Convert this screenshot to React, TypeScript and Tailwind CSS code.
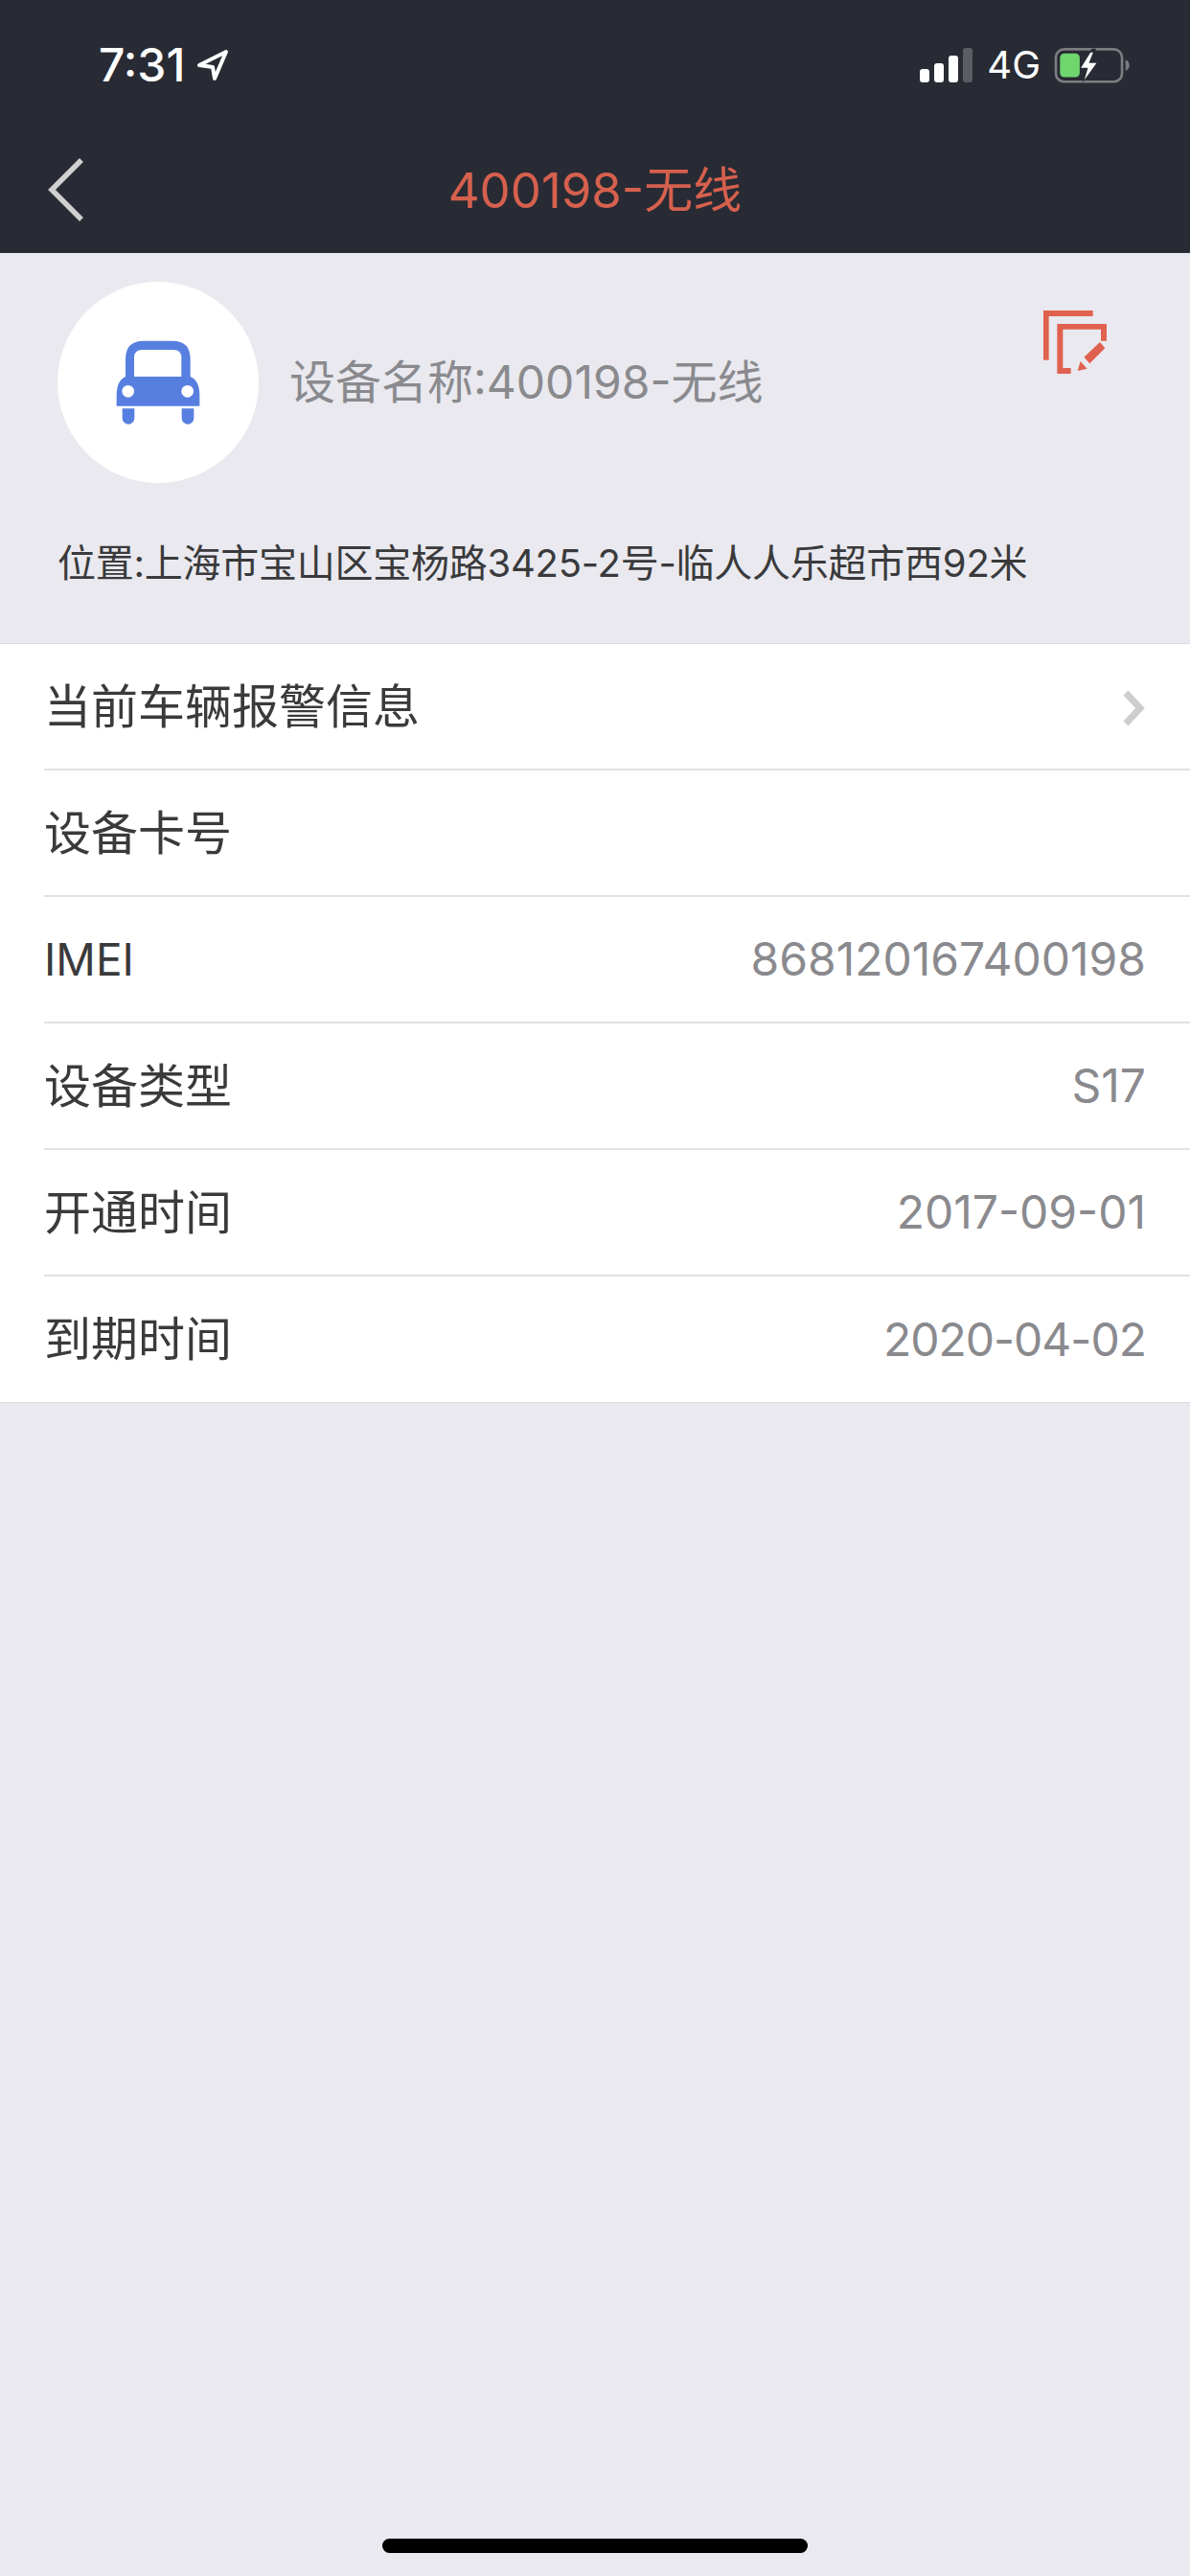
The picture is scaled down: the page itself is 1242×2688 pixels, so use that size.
const FONT = "font-['Inter','Noto_Sans_CJK_SC',sans-serif]";

function Row({ label, value, chevron, last, latin, tight }: { label: string; value?: string; chevron?: boolean; last?: boolean; latin?: boolean; tight?: boolean }) {
  return (
    <div className="pl-[46px]">
      <div className={`flex items-center justify-between pr-[46px] ${last ? "h-[131px]" : "h-[132px] border-b-2 border-[#e1e1e3]"}`}>
        <span className={`${latin ? "text-[46px]" : "text-[49px]"} text-[#3a3a3c] leading-none`}>{label}</span>
        {value && <span className={`text-[48px] text-[#8a8a8e] leading-none ${tight ? "tracking-[-1px]" : ""}`}>{value}</span>}
        {chevron && (
          <svg width="24" height="44" viewBox="0 0 24 44" className="mt-[6px]">
            <polyline points="3,5 18,21 3,37" fill="none" stroke="#cdcdcf" strokeWidth="7" />
          </svg>
        )}
      </div>
    </div>
  );
}

export default function App() {
  return (
    <div className={`h-[2688px] w-[1242px] flex flex-col bg-[#e9e9ef] overflow-hidden ${FONT}`}>
      <header className="h-[264px] shrink-0 bg-[#282b33] flex flex-col">
        <div className="h-[132px] flex items-start justify-between pt-[42px] pl-[103px] pr-[63px]">
          <div className="flex items-center gap-[12px]">
            <span className="text-[48px] leading-[52px] font-medium text-white">7:31</span>
            <svg width="34" height="34" viewBox="0 0 34 34">
              <path d="M31 3 L3 17 L17 19 L19 31 Z" fill="none" stroke="#fff" strokeWidth="4" strokeLinejoin="round" />
            </svg>
          </div>
          <div className="flex items-center gap-[14px] pt-[6px]">
            <svg width="56" height="36" viewBox="0 0 56 36">
              <rect x="0" y="22" width="10" height="14" rx="3" fill="#fff" />
              <rect x="15" y="16" width="10" height="20" rx="3" fill="#fff" />
              <rect x="30" y="8" width="10" height="28" rx="3" fill="#fff" />
              <rect x="45" y="0" width="10" height="36" rx="3" fill="#5c5d63" />
            </svg>
            <span className="text-[40px] leading-[40px] text-white">4G</span>
            <svg width="79" height="37" viewBox="653 148 238 111">
              <rect x="659" y="152" width="208" height="102" rx="26" fill="none" stroke="#7c7d81" strokeWidth="8" />
              <rect x="672" y="165" width="62" height="75" rx="14" fill="#6fd66e" />
              <path d="M772 150 L734 212 L756 212 L742 258 L792 192 L768 192 L786 150 Z" fill="#282b33" />
              <path d="M768 162 L738 210 L760 210 L749 248 L787 195 L763 195 L776 162 Z" fill="#fff" />
              <path d="M878 185 Q890 190 890 203 Q890 215 878 220 Z" fill="#7c7d81" />
            </svg>
          </div>
        </div>
        <div className="relative flex-1 flex items-center justify-center">
          <svg width="42" height="70" viewBox="0 0 42 70" className="absolute left-[48px] top-[31px]">
            <polyline points="37,4 6,35 37,66" fill="none" stroke="#d0d0d0" strokeWidth="5.5" />
          </svg>
          <span className="text-[51px] leading-none text-[#d6604e]">400198-无线</span>
        </div>
      </header>

      <section className="h-[407px] shrink-0 pl-[60px] pr-[60px] pt-[30px] flex flex-col">
        <div className="flex items-start">
          <div className="w-[210px] h-[210px] rounded-full bg-white flex items-center justify-center shrink-0">
            <svg width="88" height="88" viewBox="245 226 264 264">
              <path
                fill="#567fe0"
                fillRule="evenodd"
                d="M275 340 V285 Q275 228 332 228 H422 Q478 228 478 285 V340 Q507 352 507 400 V432 H247 V400 Q247 352 275 340Z M302 340 H450 V280 Q450 256 425 256 H328 Q302 256 302 280Z"
              />
              <circle cx="283" cy="386" r="19" fill="#fff" />
              <circle cx="469" cy="386" r="19" fill="#fff" />
              <path fill="#567fe0" d="M265 440 H303 V470 A18 18 0 0 1 265 470Z M451 440 H489 V470 A18 18 0 0 1 451 470Z" />
            </svg>
          </div>
          <span className="ml-[32px] mt-[76px] text-[48px] leading-[58px] text-[#8a8a8e]">设备名称:400198-无线</span>
          <svg width="110" height="110" viewBox="0 0 330 330" className="ml-auto mr-[12px] mt-[6px]">
            <path fill="#e0614f" d="M87 72 H242 V90 H104 V227 H87Z M130 114 H285 V167 H267 V131 H148 V252 H173 V270 H130Z M264 171 L280 190 L232 238 L214 218Z M203 231 L224 254 L194 261Z" />
          </svg>
        </div>
        <p className="mt-[60px] text-[40px] leading-[48px] tracking-[-0.25px] text-[#3a3a3c]">位置:上海市宝山区宝杨路3425-2号-临人人乐超市西92米</p>
      </section>

      <section className="shrink-0 bg-white border-t border-b border-[#dcdce0]">
        <Row label="当前车辆报警信息" chevron />
        <Row label="设备卡号" />
        <Row label="IMEI" value="868120167400198" latin />
        <Row label="设备类型" value="S17" />
        <Row label="开通时间" value="2017-09-01" />
        <Row label="到期时间" value="2020-04-02" last tight />
      </section>

      <div className="mt-auto flex justify-center pb-[24px]">
        <div className="w-[444px] h-[15px] rounded-full bg-black" />
      </div>
    </div>
  );
}
